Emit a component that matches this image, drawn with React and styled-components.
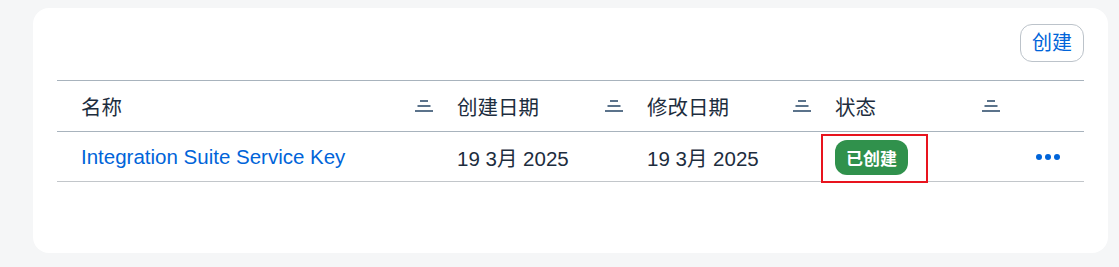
import React from "react";
import styled, { createGlobalStyle } from "styled-components";

const Global = createGlobalStyle`
  html, body { margin: 0; padding: 0; background: #f5f6f7; }
  body { font-family: "Liberation Sans", Arial, "Noto Sans CJK SC", sans-serif; }
`;

const Page = styled.div`
  display: flex;
  padding: 8px 11px 14px 33px;
  height: 267px;
  box-sizing: border-box;
`;

const Card = styled.section`
  flex: 1;
  background: #ffffff;
  border-radius: 16px;
  padding: 16px 24px 0 24px;
  display: flex;
  flex-direction: column;
`;

const Toolbar = styled.div`
  display: flex;
  justify-content: flex-end;
  margin-bottom: 18px;
`;

const Button = styled.button`
  height: 38px;
  padding: 0 11px;
  border: 1px solid #bcc3ca;
  border-radius: 12px;
  background: #ffffff;
  color: #0064d9;
  font-family: "Liberation Sans", "Noto Sans CJK SC", sans-serif;
  font-size: 20px;
  line-height: 1;
  cursor: pointer;
`;

const Table = styled.div`
  display: grid;
  grid-template-columns: 388px 190px 188px 189px 1fr;
  border-top: 1px solid #a8b3bd;
`;

const HeaderCell = styled.div`
  height: 50px;
  display: flex;
  align-items: center;
  justify-content: space-between;
  padding: 0 12px 0 ${(p) => (p.$first ? "24px" : "12px")};
  border-bottom: 1px solid #a8b3bd;
  font-family: "Liberation Sans", "Noto Sans CJK SC", sans-serif;
  font-size: 20.5px;
  color: #1d2d3e;
`;

const Cell = styled.div`
  height: 50px;
  display: flex;
  align-items: center;
  justify-content: ${(p) => (p.$center ? "center" : "flex-start")};
  padding: 1px 12px 0 ${(p) => (p.$first ? "24px" : "12px")};
  box-sizing: border-box;
  border-bottom: 1px solid #c2c6ca;
  font-family: "Liberation Sans", "Noto Sans CJK SC", sans-serif;
  font-size: 20.5px;
  color: #1d2d3e;
  position: relative;
`;

const Link = styled.a`
  color: #0064d9;
  text-decoration: none;
  font-size: 20.5px;
`;

const Badge = styled.span`
  display: inline-flex;
  align-items: center;
  height: 35px;
  padding: 0 11px;
  border-radius: 12px;
  background: #30914c;
  color: #ffffff;
  font-weight: bold;
  font-size: 17px;
  font-family: "Noto Sans CJK SC", sans-serif;
`;

const Highlight = styled.div`
  position: absolute;
  left: -2px;
  top: 2px;
  width: 103px;
  height: 45px;
  border: 2px solid #e8141e;
  pointer-events: none;
`;

const Dots = styled.div`
  display: flex;
  gap: 3px;
`;

const Dot = styled.span`
  width: 6px;
  height: 6px;
  border-radius: 50%;
  background: #0064d9;
`;

const SortIcon = () => (
  <svg width="18" height="12" viewBox="0 0 18 12" style={{ display: "block" }}>
    <rect x="5" y="0" width="8" height="2" fill="#5b738b" />
    <rect x="2.5" y="5" width="13" height="2" fill="#5b738b" />
    <rect x="0" y="10" width="18" height="2" fill="#5b738b" />
  </svg>
);

const columns = [
  { label: "名称", sort: true },
  { label: "创建日期", sort: true },
  { label: "修改日期", sort: true },
  { label: "状态", sort: true },
  { label: "", sort: false },
];

export default function App() {
  return (
    <>
      <Global />
      <Page>
        <Card>
          <Toolbar>
            <Button>创建</Button>
          </Toolbar>
          <Table>
            {columns.map((c, i) => (
              <HeaderCell key={i} $first={i === 0}>
                <span>{c.label}</span>
                {c.sort && <SortIcon />}
              </HeaderCell>
            ))}
            <Cell $first>
              <Link href="#">Integration Suite Service Key</Link>
            </Cell>
            <Cell>19 3月 2025</Cell>
            <Cell>19 3月 2025</Cell>
            <Cell>
              <Badge>已创建</Badge>
              <Highlight />
            </Cell>
            <Cell $center>
              <Dots>
                <Dot />
                <Dot />
                <Dot />
              </Dots>
            </Cell>
          </Table>
        </Card>
      </Page>
    </>
  );
}
